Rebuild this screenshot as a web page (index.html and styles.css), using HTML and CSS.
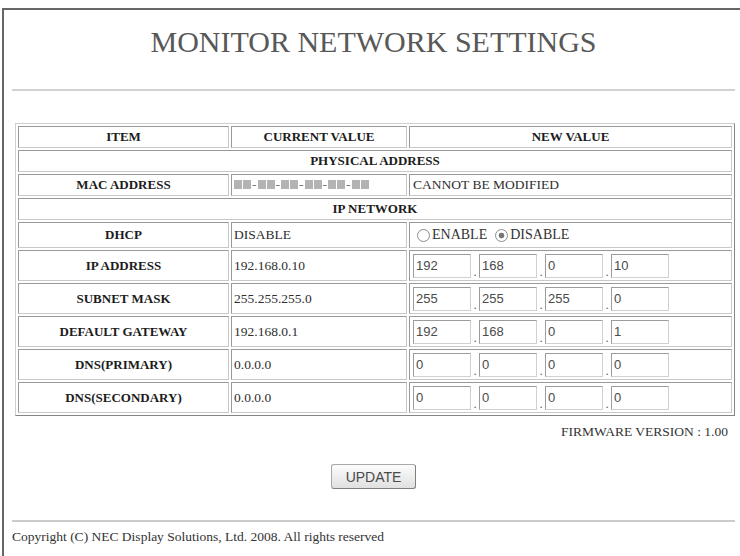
FILE: index.html
```html
<!DOCTYPE html>
<html lang="en">
<head>
<meta charset="utf-8">
<title>Monitor Network Settings</title>
<link rel="stylesheet" href="styles.css">
</head>
<body>
<div class="frame">
  <div class="page">
    <h1 class="title">MONITOR NETWORK SETTINGS</h1>
    <hr class="rule rule-top">
    <table class="settings">
      <colgroup><col class="c1"><col class="c2"><col class="c3"></colgroup>
      <tr class="r-head"><th>ITEM</th><th>CURRENT VALUE</th><th>NEW VALUE</th></tr>
      <tr class="r-text"><th colspan="3">PHYSICAL ADDRESS</th></tr>
      <tr class="r-text">
        <th>MAC ADDRESS</th>
        <td class="cur"><span class="mac"><span class="pair"><i></i><i></i></span><span class="hy">-</span><span class="pair"><i></i><i></i></span><span class="hy">-</span><span class="pair"><i></i><i></i></span><span class="hy">-</span><span class="pair"><i></i><i></i></span><span class="hy">-</span><span class="pair"><i></i><i></i></span><span class="hy">-</span><span class="pair"><i></i><i></i></span></span></td>
        <td class="new">CANNOT BE MODIFIED</td>
      </tr>
      <tr class="r-text"><th colspan="3">IP NETWORK</th></tr>
      <tr class="r-dhcp">
        <th>DHCP</th>
        <td class="cur">DISABLE</td>
        <td class="new">
          <div class="radios">
            <label class="opt"><input type="radio" name="dhcp" class="rd">ENABLE</label>
            <label class="opt"><input type="radio" name="dhcp" class="rd" checked>DISABLE</label>
          </div>
        </td>
      </tr>
      <tr class="r-ip">
        <th>IP ADDRESS</th>
        <td class="cur">192.168.0.10</td>
        <td class="new"><div class="ip"><input class="oct" value="192"><span class="dot">.</span><input class="oct" value="168"><span class="dot">.</span><input class="oct" value="0"><span class="dot">.</span><input class="oct" value="10"></div></td>
      </tr>
      <tr class="r-ip">
        <th>SUBNET MASK</th>
        <td class="cur">255.255.255.0</td>
        <td class="new"><div class="ip"><input class="oct" value="255"><span class="dot">.</span><input class="oct" value="255"><span class="dot">.</span><input class="oct" value="255"><span class="dot">.</span><input class="oct" value="0"></div></td>
      </tr>
      <tr class="r-ip">
        <th>DEFAULT GATEWAY</th>
        <td class="cur">192.168.0.1</td>
        <td class="new"><div class="ip"><input class="oct" value="192"><span class="dot">.</span><input class="oct" value="168"><span class="dot">.</span><input class="oct" value="0"><span class="dot">.</span><input class="oct" value="1"></div></td>
      </tr>
      <tr class="r-ip">
        <th>DNS(PRIMARY)</th>
        <td class="cur">0.0.0.0</td>
        <td class="new"><div class="ip"><input class="oct" value="0"><span class="dot">.</span><input class="oct" value="0"><span class="dot">.</span><input class="oct" value="0"><span class="dot">.</span><input class="oct" value="0"></div></td>
      </tr>
      <tr class="r-ip">
        <th>DNS(SECONDARY)</th>
        <td class="cur">0.0.0.0</td>
        <td class="new"><div class="ip"><input class="oct" value="0"><span class="dot">.</span><input class="oct" value="0"><span class="dot">.</span><input class="oct" value="0"><span class="dot">.</span><input class="oct" value="0"></div></td>
      </tr>
    </table>
    <div class="firmware">FIRMWARE VERSION : 1.00</div>
    <div class="actions"><button class="btn" type="button">UPDATE</button></div>
    <hr class="rule rule-bottom">
    <p class="copyright">Copyright (C) NEC Display Solutions, Ltd. 2008. All rights reserved</p>
  </div>
</div>
</body>
</html>
```
FILE: styles.css
```css
html, body {
  margin: 0;
  padding: 0;
  background: #fff;
}
body {
  font-family: "Liberation Serif", "Times New Roman", serif;
  color: #2e2e2e;
  overflow: hidden;
}
.frame {
  margin: 8px 0 0 2px;
  height: 548px;
  box-sizing: border-box;
  border-top: 2px solid #666;
  border-left: 2px solid #666;
}
.page {
  padding: 0 5px 0 8px;
}
.title {
  margin: 15px 0 0;
  font-size: 30px;
  line-height: 34px;
  font-weight: normal;
  text-align: center;
  color: #585858;
}
.rule {
  margin: 0;
  border: 0;
  height: 2px;
  background: #d2d2d2;
}
.rule-top {
  margin-top: 30px;
}
.settings {
  margin: 32px 0 0 3px;
  width: 720px;
  table-layout: fixed;
  border-collapse: separate;
  border-spacing: 2px;
  border: 1px solid;
  border-color: #cfcfcf #858585 #858585 #cfcfcf;
  font-size: 13.5px;
}
.c1 { width: 211px; }
.c2 { width: 176px; }
.c3 { width: 323px; }
.settings th,
.settings td {
  border: 1px solid;
  border-color: #999 #c8c8c8 #c8c8c8 #999;
  padding: 0 2px;
  vertical-align: middle;
  white-space: nowrap;
}
.settings th {
  font-size: 13px;
  font-weight: bold;
  text-align: center;
  color: #1c1c1c;
}
.settings td.new {
  padding-left: 3px;
}
.r-head { height: 22px; }
.r-text { height: 22px; }
.r-dhcp { height: 26px; }
.r-ip { height: 31px; }

.mac {
  display: inline-flex;
  align-items: center;
}
.pair {
  display: inline-flex;
  gap: 1px;
}
.pair i {
  display: block;
  width: 8px;
  height: 9px;
  background: #b3b3b3;
}
.hy {
  margin: 0 1px;
  color: #777;
}

.radios {
  display: flex;
  align-items: center;
  padding-left: 4px;
}
.opt {
  display: inline-flex;
  align-items: center;
  margin-right: 8px;
  font-size: 14px;
  color: #333;
}
.rd {
  appearance: none;
  -webkit-appearance: none;
  width: 13px;
  height: 13px;
  margin: 0 2px 0 0;
  border: 1px solid #8c8c8c;
  border-radius: 50%;
  background: #fff;
  box-sizing: border-box;
}
.rd:checked {
  background: radial-gradient(circle, #777 0, #777 2.5px, #fff 3.2px);
}

.ip {
  display: flex;
  align-items: flex-end;
}
.oct {
  width: 58px;
  height: 24px;
  box-sizing: border-box;
  margin: 0;
  padding: 0 2px;
  border: 1px solid;
  border-color: #9c9c9c #d0d0d0 #d0d0d0 #9c9c9c;
  font-family: "Liberation Sans", Arial, sans-serif;
  font-size: 13px;
  color: #4a4a4a;
  background: #fff;
}
.dot {
  width: 8px;
  text-align: center;
  font-size: 13px;
  line-height: 13px;
  color: #666;
}

.firmware {
  margin-top: 8px;
  line-height: 16px;
  font-size: 13.5px;
  text-align: right;
  padding-right: 7px;
  color: #333;
}
.actions {
  display: flex;
  justify-content: center;
  margin-top: 24px;
}
.btn {
  width: 85px;
  height: 25px;
  padding: 0;
  font-family: "Liberation Sans", Arial, sans-serif;
  font-size: 14px;
  color: #4a4a4a;
  border: 1px solid;
  border-color: #a8a8a8 #7e7e7e #7e7e7e #a8a8a8;
  border-radius: 3px;
  background: linear-gradient(#fcfcfc, #e0e0e0);
}
.rule-bottom {
  margin-top: 31px;
  background: #cbcbcb;
}
.copyright {
  margin: 7px 0 0;
  line-height: 16px;
  font-size: 13.5px;
  color: #333;
}
```
